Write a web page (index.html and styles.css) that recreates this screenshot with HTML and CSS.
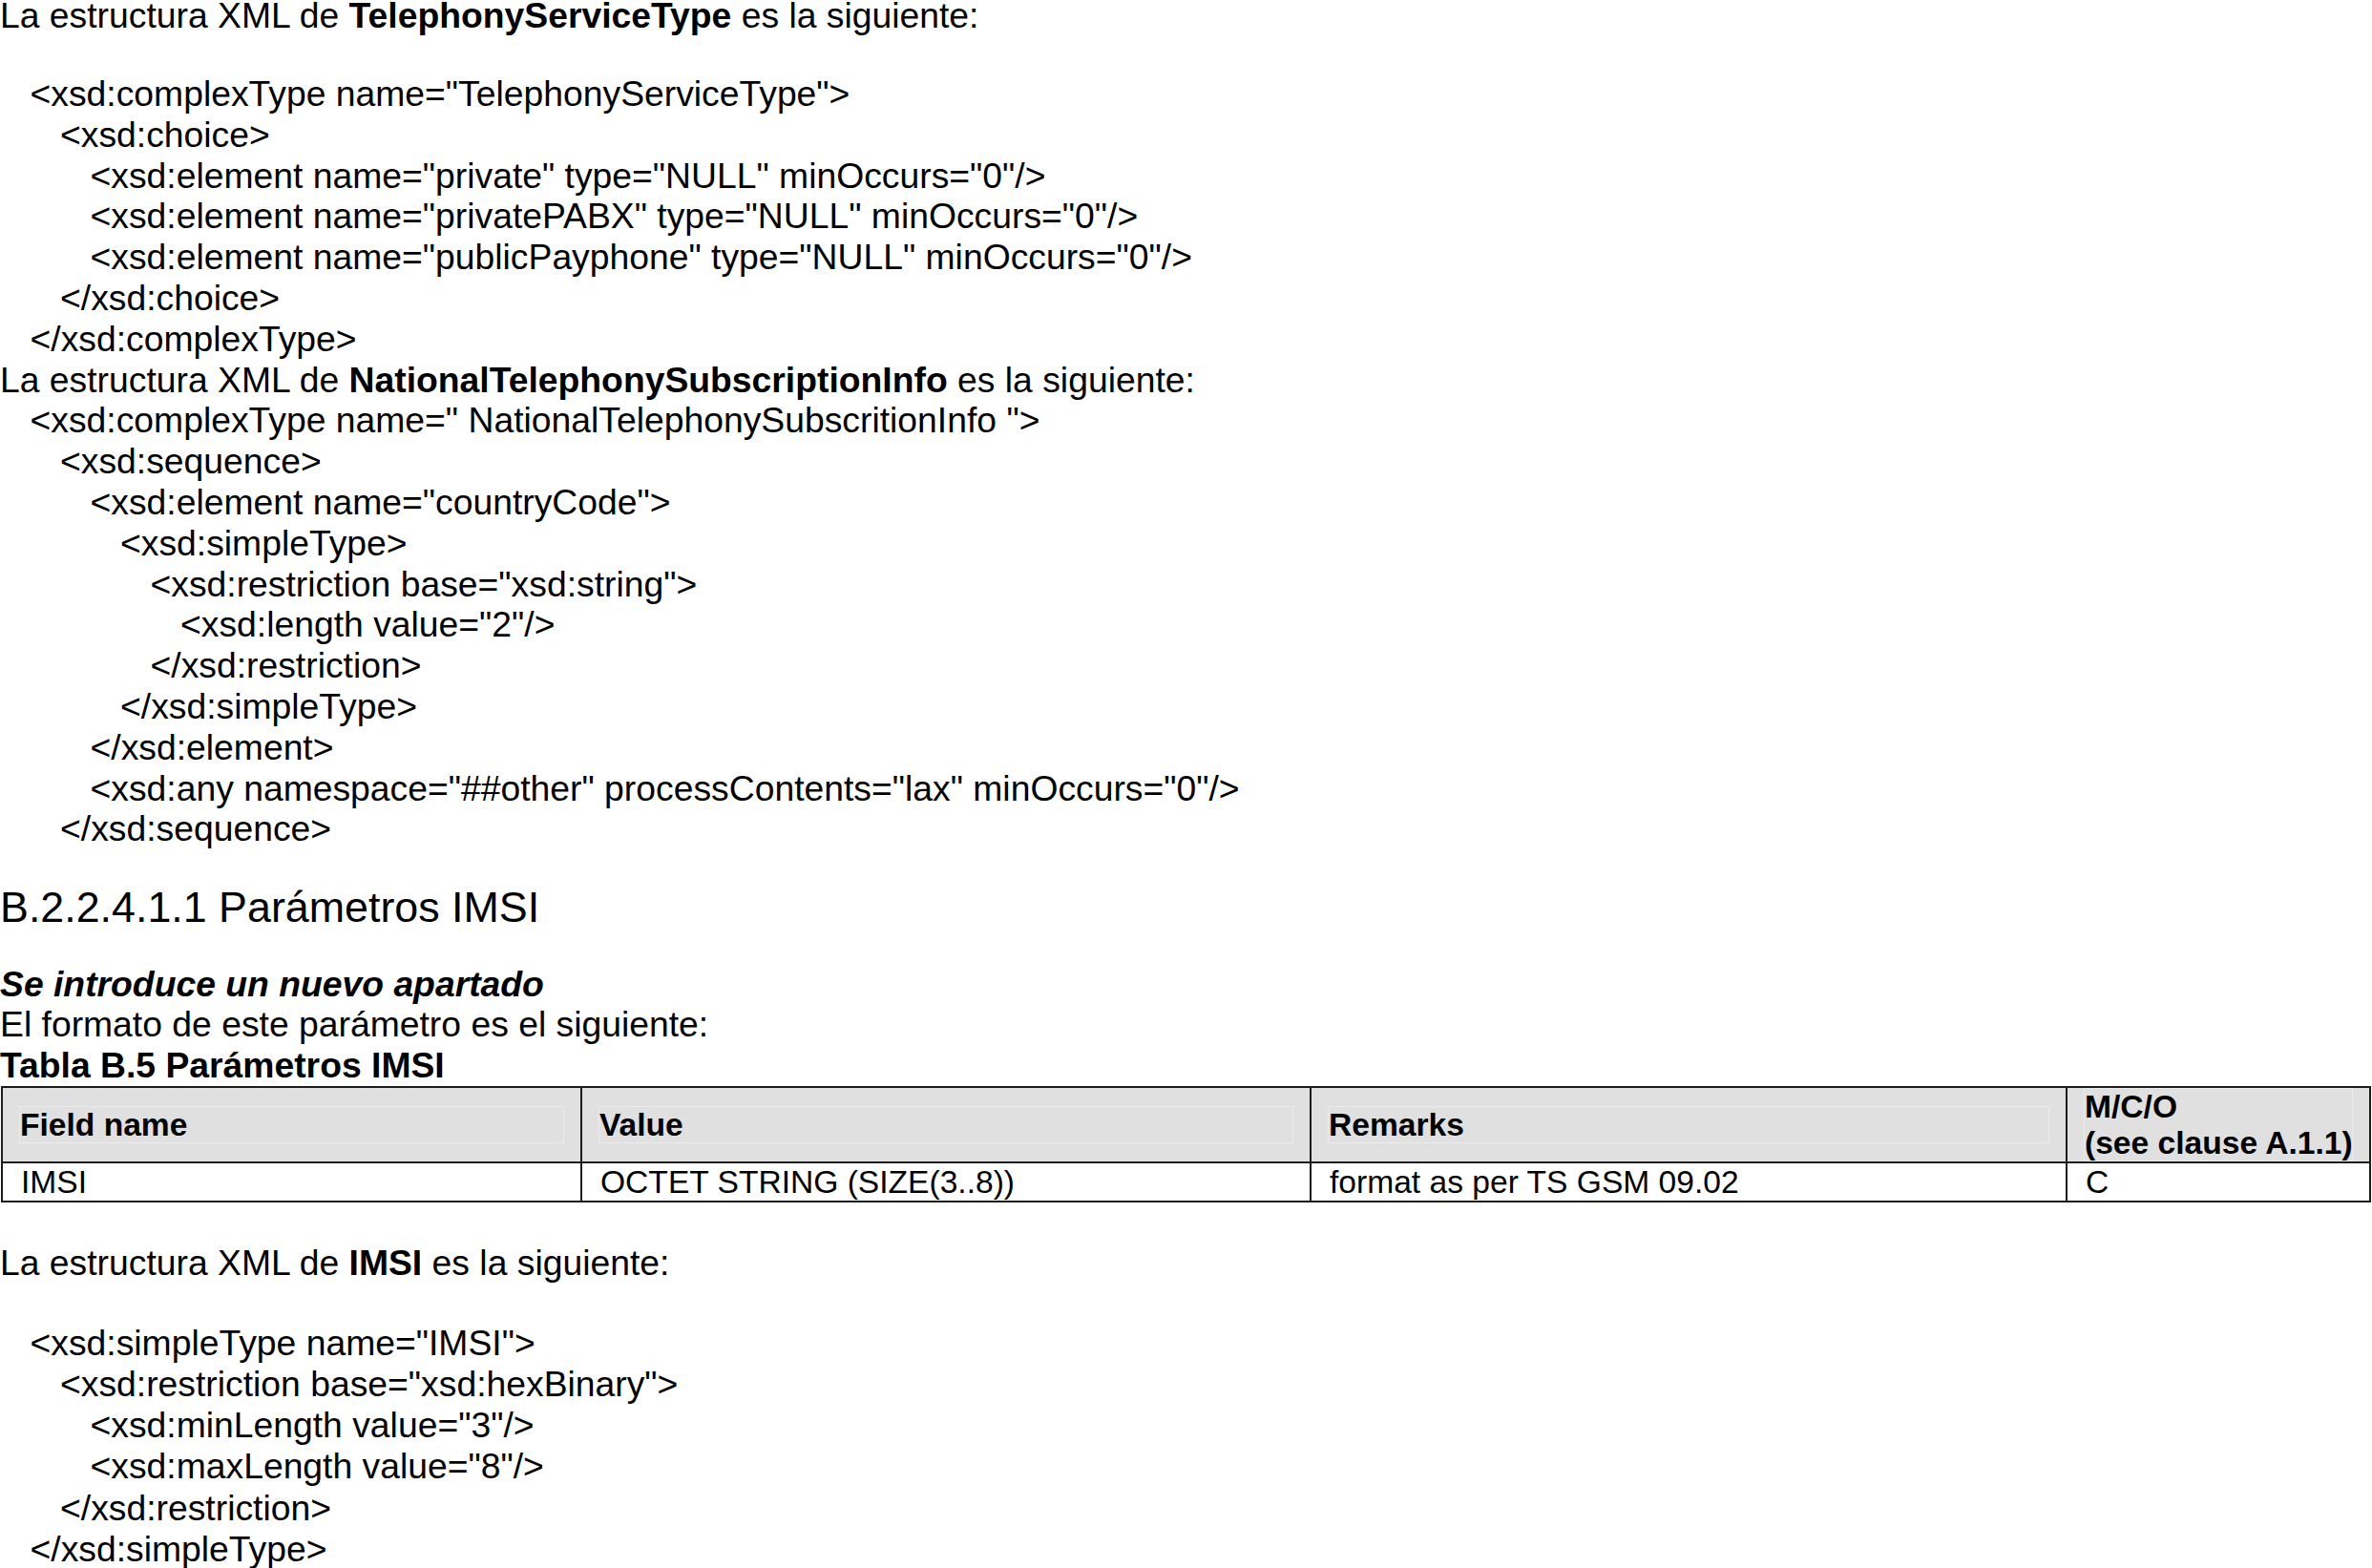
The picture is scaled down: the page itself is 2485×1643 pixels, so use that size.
FILE: index.html
```html
<!DOCTYPE html>
<html lang="es">
<head>
<meta charset="utf-8">
<title>Parámetros IMSI</title>
<link rel="stylesheet" href="styles.css">
</head>
<body>
<main class="page">
  <p class="lead lead-first">La estructura XML de <b>TelephonyServiceType</b> es la siguiente:</p>
  <div class="code">
    <div class="l1">&lt;xsd:complexType name="TelephonyServiceType"&gt;</div>
    <div class="l2">&lt;xsd:choice&gt;</div>
    <div class="l3">&lt;xsd:element name="private" type="NULL" minOccurs="0"/&gt;</div>
    <div class="l3">&lt;xsd:element name="privatePABX" type="NULL" minOccurs="0"/&gt;</div>
    <div class="l3">&lt;xsd:element name="publicPayphone" type="NULL" minOccurs="0"/&gt;</div>
    <div class="l2">&lt;/xsd:choice&gt;</div>
    <div class="l1">&lt;/xsd:complexType&gt;</div>
  </div>
  <p class="lead">La estructura XML de <b>NationalTelephonySubscriptionInfo</b> es la siguiente:</p>
  <div class="code">
    <div class="l1">&lt;xsd:complexType name=" NationalTelephonySubscritionInfo "&gt;</div>
    <div class="l2">&lt;xsd:sequence&gt;</div>
    <div class="l3">&lt;xsd:element name="countryCode"&gt;</div>
    <div class="l4">&lt;xsd:simpleType&gt;</div>
    <div class="l5">&lt;xsd:restriction base="xsd:string"&gt;</div>
    <div class="l6">&lt;xsd:length value="2"/&gt;</div>
    <div class="l5">&lt;/xsd:restriction&gt;</div>
    <div class="l4">&lt;/xsd:simpleType&gt;</div>
    <div class="l3">&lt;/xsd:element&gt;</div>
    <div class="l3">&lt;xsd:any namespace="##other" processContents="lax" minOccurs="0"/&gt;</div>
    <div class="l2">&lt;/xsd:sequence&gt;</div>
  </div>

  <h5 class="heading">B.2.2.4.1.1 Parámetros IMSI</h5>
  <p class="note">Se introduce un nuevo apartado</p>
  <p class="lead">El formato de este parámetro es el siguiente:</p>
  <p class="caption">Tabla B.5 Parámetros IMSI</p>

  <table class="params">
    <colgroup>
      <col class="c-field">
      <col class="c-value">
      <col class="c-remarks">
      <col class="c-mco">
    </colgroup>
    <thead>
      <tr>
        <th><div class="shade">Field name</div></th>
        <th><div class="shade">Value</div></th>
        <th><div class="shade">Remarks</div></th>
        <th><div class="shade">M/C/O<br>(see clause A.1.1)</div></th>
      </tr>
    </thead>
    <tbody>
      <tr>
        <td>IMSI</td>
        <td>OCTET STRING (SIZE(3..8))</td>
        <td>format as per TS GSM 09.02</td>
        <td>C</td>
      </tr>
    </tbody>
  </table>

  <p class="lead lead-after-table">La estructura XML de <b>IMSI</b> es la siguiente:</p>
  <div class="code code-last">
    <div class="l1">&lt;xsd:simpleType name="IMSI"&gt;</div>
    <div class="l2">&lt;xsd:restriction base="xsd:hexBinary"&gt;</div>
    <div class="l3">&lt;xsd:minLength value="3"/&gt;</div>
    <div class="l3">&lt;xsd:maxLength value="8"/&gt;</div>
    <div class="l2">&lt;/xsd:restriction&gt;</div>
    <div class="l1">&lt;/xsd:simpleType&gt;</div>
  </div>
</main>
</body>
</html>
```
FILE: styles.css
```css
html, body {
  margin: 0;
  padding: 0;
  background: #ffffff;
}

body {
  width: 2485px;
  height: 1643px;
  overflow: hidden;
  color: #000;
  font-family: "Liberation Sans", Arial, sans-serif;
  font-size: 37.3px;
  line-height: 42.8px;
}

.page {
  padding-left: 0;
}

p, h5 {
  margin: 0;
  white-space: pre;
}

.lead-first {
  line-height: 33px;
  margin-bottom: 44px;
}

.code div {
  white-space: pre;
}

.code .l1 { padding-left: 31.5px; }
.code .l2 { padding-left: 63px; }
.code .l3 { padding-left: 94.5px; }
.code .l4 { padding-left: 126px; }
.code .l5 { padding-left: 157.5px; }
.code .l6 { padding-left: 189px; }

.heading {
  font-size: 44.8px;
  line-height: 51.5px;
  font-weight: normal;
  margin-top: 35px;
}

.note {
  font-weight: bold;
  font-style: italic;
  margin-top: 33px;
}

.caption {
  font-weight: bold;
}

.params {
  border-collapse: collapse;
  table-layout: fixed;
  width: 2483px;
  margin-left: 1px;
  font-size: 33.6px;
  line-height: 37.5px;
}

.c-field { width: 607px; }
.c-value { width: 764px; }
.c-remarks { width: 792px; }
.c-mco { width: 318px; }

.params th,
.params td {
  border: 2px solid #1c1c1c;
  text-align: left;
  vertical-align: middle;
  white-space: nowrap;
}

.params th {
  background: #e0e0e0;
  font-weight: bold;
  padding: 0 18px;
}

.params td {
  padding: 1px 19px 0;
}

.shade {
  border: 1px solid #ebebeb;
  margin: 0 -1px;
}

.lead-after-table {
  margin-top: 42.5px;
}

.code-last {
  margin-top: 41px;
  line-height: 43.2px;
}
```
